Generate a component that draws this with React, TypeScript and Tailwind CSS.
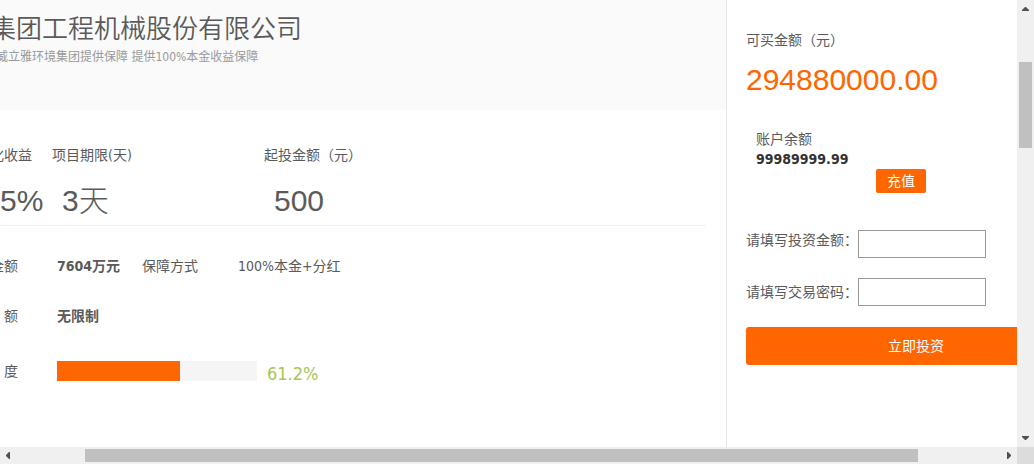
import type { ReactNode } from 'react';

const stats = [
  { label: '化收益', value: '5%' },
  { label: '项目期限(天)', value: '3天' },
  { label: '起投金额（元）', value: '500' },
];

const progress = 61.2;
const trackWidth = 200;

function Arrow({ points }: { points: string }) {
  return (
    <svg viewBox="0 0 17 17" className="size-[17px] shrink-0" fill="#505050" aria-hidden="true">
      <polygon points={points} />
    </svg>
  );
}

function Term({ children }: { children: ReactNode }) {
  return <dt className="w-[67px] shrink-0">{children}</dt>;
}

export default function App() {
  return (
    <div className="grid h-screen grid-cols-[minmax(0,1fr)_17px] grid-rows-[minmax(0,1fr)_17px] overflow-hidden bg-white font-['DejaVu_Sans_Condensed','Noto_Sans_CJK_SC',sans-serif] text-sm text-[#5a5a5a]">
      <div className="flex overflow-hidden">
        <main className="min-w-0 flex-1 overflow-hidden">
          <header className="h-[110px] bg-[#fafafa] pt-2">
            <h1 className="-ml-2.5 pt-px text-[26px] leading-10 font-[350] whitespace-nowrap">集团工程机械股份有限公司</h1>
            <p className="-ml-1 text-xs leading-4 whitespace-nowrap text-[#999]">
              威立雅环境集团提供保障 提供100%本金收益保障
            </p>
          </header>

          <section className="mr-5 -ml-2.5 grid h-[116px] grid-cols-[62px_212px_1fr] border-b border-[#f2f2f2] pt-[35px]">
            {stats.map((s) => (
              <div key={s.label} className="whitespace-nowrap">
                <p className="leading-5">{s.label}</p>
                <p className="mt-4 pl-2.5 font-['Liberation_Sans','Noto_Sans_CJK_SC',sans-serif] text-3xl leading-10 font-light">
                  {s.value}
                </p>
              </div>
            ))}
          </section>

          <dl className="-ml-2.5 whitespace-nowrap">
            <div className="mt-[30px] flex leading-5">
              <Term>金额</Term>
              <dd className="w-[85px] font-bold">7604万元</dd>
              <dt className="w-24">保障方式</dt>
              <dd>100%本金+分红</dd>
            </div>
            <div className="mt-[30px] flex leading-5">
              <Term>
                <span className="pl-3.5">额</span>
              </Term>
              <dd className="font-bold">无限制</dd>
            </div>
            <div className="mt-[35px] flex leading-5">
              <Term>
                <span className="pl-3.5">度</span>
              </Term>
              <dd className="flex gap-2.5">
                <div className="h-5 w-[200px] bg-[#f5f5f5]">
                  <div className="h-full bg-[#ff6600]" style={{ width: Math.ceil((trackWidth * progress) / 100) }} />
                </div>
                <span className="text-lg leading-[26px] text-[#a5c65b]">{progress}%</span>
              </dd>
            </div>
          </dl>
        </main>

        <aside className="w-[291px] shrink-0 overflow-hidden border-l border-[#e6e6e6] pt-[30px] pl-[19px]">
          <p className="leading-5">可买金额（元）</p>
          <p className="mt-2.5 font-['Liberation_Sans',sans-serif] text-3xl leading-10 text-[#ff6600]">294880000.00</p>
          <div className="mt-[29px] w-[180px] pl-2.5">
            <p className="leading-5">账户余额</p>
            <p className="leading-5 font-bold text-[#333]">99989999.99</p>
            <button type="button" className="ml-auto block h-6 w-[50px] rounded-xs bg-[#ff6600] leading-6 text-white">
              充值
            </button>
          </div>
          <form className="mt-[37px]" onSubmit={(e) => e.preventDefault()}>
            <div className="flex items-start">
              <label htmlFor="amount" className="w-28 shrink-0 leading-5 whitespace-nowrap">
                请填写投资金额：
              </label>
              <input id="amount" type="text" className="h-7 w-32 shrink-0 border border-[#999] bg-white px-1 outline-none" />
            </div>
            <div className="mt-5 flex items-center">
              <label htmlFor="password" className="w-28 shrink-0 leading-7 whitespace-nowrap">
                请填写交易密码：
              </label>
              <input id="password" type="password" className="h-7 w-32 shrink-0 border border-[#999] bg-white px-1 outline-none" />
            </div>
            <button type="submit" className="mt-[21px] h-[38px] w-[340px] rounded-[3px] bg-[#ff6600] text-white">
              立即投资
            </button>
          </form>
        </aside>
      </div>

      <div className="flex flex-col items-center bg-[#f0f0f0]" aria-hidden="true">
        <Arrow points="5,11 5,10 8,7 9,7 12,10 12,11" />
        <div className="mt-[45px] h-[86px] w-[13px] bg-[#c0c0c0]" />
        <div className="mt-auto">
          <Arrow points="5,6 12,6 12,7 9,10 8,10 5,7" />
        </div>
      </div>

      <div className="flex items-center bg-[#f0f0f0]" aria-hidden="true">
        <Arrow points="10,5 10,12 9,12 6,9 6,8 9,5" />
        <div className="flex-1 pr-[82px] pl-[68px]">
          <div className="h-[13px] bg-[#c0c0c0]" />
        </div>
        <Arrow points="7,5 8,5 11,8 11,9 8,12 7,12" />
      </div>
      <div className="bg-[#dcdcdc]" />
    </div>
  );
}
